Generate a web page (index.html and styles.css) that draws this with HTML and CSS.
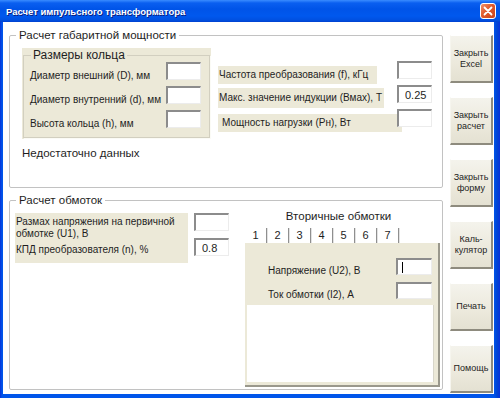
FILE: index.html
```html
<!DOCTYPE HTML>
<html>
	<head>
		<meta charset="utf-8">
		<title>Расчет импульсного трансформатора</title>
		<link rel="stylesheet" href="styles.css">
	</head>
	<body>

		<div class="window">

			<div class="titlebar">
				<span class="title">Расчет импульсного трансформатора</span>
				<span class="close-button">
					<svg width="10" height="10" viewBox="0 0 10 10"><path d="M1.5 1.5 L8.5 8.5 M8.5 1.5 L1.5 8.5" stroke="#fff" stroke-width="1.8" stroke-linecap="round"/></svg>
				</span>
			</div>

			<div class="client">

				<div class="frames">

					<fieldset class="group group-power">
						<legend>Расчет габаритной мощности</legend>

						<div class="power-body">
							<div class="ring">
								<fieldset class="ring-set">
									<legend>Размеры кольца</legend>
									<div class="ring-row">
										<span class="ring-label">Диаметр внешний (D), мм</span>
										<input class="field" type="text">
									</div>
									<div class="ring-row">
										<span class="ring-label">Диаметр внутренний (d), мм</span>
										<input class="field" type="text">
									</div>
									<div class="ring-row">
										<span class="ring-label">Высота кольца (h), мм</span>
										<input class="field" type="text">
									</div>
								</fieldset>
							</div>

							<div class="params">
								<div class="param">
									<span class="param-label param-label-freq">Частота преобразования (f), кГц</span>
									<input class="field" type="text">
								</div>
								<div class="param">
									<span class="param-label param-label-induction">Макс. значение индукции (Вмах), Т</span>
									<input class="field" type="text" value="0.25">
								</div>
								<div class="param">
									<span class="param-label param-label-power">Мощность нагрузки (Рн), Вт</span>
									<input class="field" type="text">
								</div>
							</div>
						</div>

						<div class="status">Недостаточно данных</div>
					</fieldset>

					<fieldset class="group group-windings">
						<legend>Расчет обмоток</legend>

						<div class="windings-body">
							<div class="primary">
								<div class="primary-labels">
									<span class="primary-voltage">Размах напряжения на первичной обмотке (U1), В</span>
									<span class="primary-efficiency">КПД преобразователя (n), %</span>
								</div>
								<div class="primary-fields">
									<input class="field" type="text">
									<input class="field" type="text" value="0.8">
								</div>
							</div>

							<div class="secondary">
								<div class="secondary-title">Вторичные обмотки</div>
								<div class="tabs">
									<span class="tab tab-active">1</span>
									<span class="tab">2</span>
									<span class="tab">3</span>
									<span class="tab">4</span>
									<span class="tab">5</span>
									<span class="tab">6</span>
									<span class="tab">7</span>
								</div>
								<div class="tab-page">
									<div class="secondary-row">
										<span class="secondary-label">Напряжение (U2), В</span>
										<span class="field field-focused"><i class="caret"></i></span>
									</div>
									<div class="secondary-row">
										<span class="secondary-label">Ток обмотки (I2), А</span>
										<input class="field" type="text">
									</div>
									<div class="listbox"></div>
								</div>
							</div>
						</div>
					</fieldset>

				</div>

				<div class="buttons">
					<button class="command" type="button">Закрыть<br>Excel</button>
					<button class="command" type="button">Закрыть<br>расчет</button>
					<button class="command" type="button">Закрыть<br>форму</button>
					<button class="command" type="button">Каль-<br>кулятор</button>
					<button class="command" type="button">Печать</button>
					<button class="command" type="button">Помощь</button>
				</div>

			</div>
		</div>

	</body>
</html>
```

FILE: styles.css
```css
* {
	box-sizing:				border-box;
}

html,
body {
	background:				#ffffff;
	color:					#1e1e1e;
	font-family:			"Liberation Sans", Arial, sans-serif;
	height:					100%;
	margin:					0;
	padding:				0;
}

.window {
	background:				linear-gradient(to right, #0831d9 0, #0055ea 2px, #0055ea 494px, #0044d4 497px, #0831d9 500px);
	display:				flex;
	flex-direction:			column;
	height:					398px;
	width:					500px;
}

/* title bar */

.titlebar {
	align-items:			center;
	background:				linear-gradient(to bottom, #3a8cff 0, #0a5ff0 3px, #0054e8 9px, #0058ee 16px, #0050e0 20px, #0040d0 22px);
	display:				flex;
	flex:					0 0 22px;
	justify-content:		space-between;
	padding:				0 4px 0 6px;
}

.title {
	color:					#ffffff;
	font-size:				9.5px;
	font-weight:			bold;
	text-shadow:			1px 1px 0 #0a1f80;
}

.close-button {
	align-items:			center;
	background:				linear-gradient(135deg, #f0906a 0, #e05a2c 45%, #c8441c 100%);
	border:					1px solid #ffffff;
	border-radius:			3px;
	display:				flex;
	height:					16px;
	justify-content:		center;
	width:					16px;
}

/* client area */

.client {
	background:				#ffffff;
	display:				flex;
	flex:					1;
	margin:					0 6px 4px 3px;
}

.frames {
	display:				flex;
	flex-direction:			column;
	gap:					5px;
	margin-left:			6px;
	padding-top:			6px;
	width:					434px;
}

.group {
	border:					1px solid #c2c2c2;
	border-radius:			2px;
	margin:					0;
	min-width:				0;
}

.group > legend {
	color:					#1e1e1e;
	font-size:				11.5px;
	line-height:			14px;
	padding:				0 3px;
}

.group-power {
	height:					160px;
	padding:				6px 10px 0 12px;
}

.group-power > legend {
	margin-left:			-6px;
}

.group-windings {
	height:					197px;
	padding:				6px 2px 0 5px;
}

.group-windings > legend {
	margin-left:			1px;
}

/* inputs */

.field {
	background:				#ffffff;
	border-color:			#8c8c8c #ececec #ececec #8c8c8c;
	border-style:			solid;
	border-width:			2px 1px 1px 2px;
	color:					#1e1e1e;
	display:				block;
	flex:					0 0 auto;
	font-family:			"Liberation Sans", Arial, sans-serif;
	font-size:				11px;
	height:					18px;
	margin:					0;
	outline:				none;
	padding:				0 0 0 6px;
	width:					35px;
}

.field-focused {
	align-items:			center;
	display:				flex;
	padding-left:			4px;
}

.caret {
	background:				#000000;
	display:				block;
	height:					11px;
	width:					1px;
}

/* габаритная мощность */

.power-body {
	display:				flex;
	gap:					7px;
}

.ring {
	background:				#ece9d8;
	flex:					0 0 189px;
	padding:				0 1px 1px 1px;
}

.ring-set {
	border:					1px solid #d2cfc0;
	box-shadow:				1px 1px 0 #fbfbf6;
	display:				flex;
	flex-direction:			column;
	gap:					6px;
	margin:					0;
	min-width:				0;
	padding:				0 8px 9px 6px;
}

.ring-set > legend {
	color:					#1e1e1e;
	font-size:				12px;
	line-height:			14px;
	margin-left:			1px;
	padding:				0 2px;
}

.ring-row {
	align-items:			flex-end;
	display:				flex;
	height:					18px;
	justify-content:		space-between;
}

.ring-label,
.secondary-label {
	font-size:				10px;
	line-height:			13px;
	margin-bottom:			-2px;
	white-space:			nowrap;
}

.params {
	display:				flex;
	flex-direction:			column;
	margin-top:				13px;
	width:					214px;
}

.param {
	display:				grid;
	grid-template-columns:	1fr 35px;
	height:					24px;
}

.param-label {
	background:				#ece9d8;
	font-size:				10px;
	grid-area:				1 / 1 / 2 / 3;
	height:					18px;
	line-height:			18px;
	margin-top:				5px;
	padding-left:			1px;
	white-space:			nowrap;
}

.param-label-freq {
	width:					159px;
}

.param-label-induction {
	height:					20px;
	line-height:			20px;
	margin-top:				3px;
	width:					166px;
}

.param-label-power {
	padding-left:			4px;
	width:					184px;
}

.param .field {
	grid-area:				1 / 2 / 2 / 3;
	z-index:				1;
}

.status {
	font-size:				11.5px;
	line-height:			15px;
	margin-top:				7px;
}

/* обмотки */

.windings-body {
	display:				flex;
	justify-content:		space-between;
}

.primary {
	display:				flex;
	gap:					6px;
}

.primary-labels {
	background:				#ece9d8;
	display:				flex;
	flex-direction:			column;
	font-size:				10px;
	height:					50px;
	line-height:			12px;
	padding:				3px 0 0 1px;
	width:					173px;
}

.primary-efficiency {
	margin-top:				4px;
}

.primary-fields {
	display:				flex;
	flex-direction:			column;
	gap:					7px;
}

.secondary {
	display:				flex;
	flex-direction:			column;
	margin-top:				-4px;
	width:					195px;
}

.secondary-title {
	font-size:				11.5px;
	line-height:			14px;
	margin-bottom:			5px;
	padding-right:			8px;
	text-align:				center;
}

.tabs {
	display:				flex;
	height:					15px;
}

.tab {
	border-right:			1px solid #8f8f8f;
	box-shadow:				1px 0 0 #e2e2e2;
	font-size:				11px;
	line-height:			15px;
	text-align:				center;
	width:					22px;
}

.tab-active {
	background:				#ffffff;
}

.tab-page {
	background:				#ece9d8;
	border-bottom:			2px solid #9a988c;
	border-right:			2px solid #9a988c;
	display:				flex;
	flex-direction:			column;
	gap:					7px;
	height:					144px;
	padding:				15px 6px 3px 0;
}

.secondary-row {
	align-items:			flex-end;
	display:				flex;
	height:					17px;
	justify-content:		space-between;
	padding-left:			23px;
}

.secondary-row .field {
	height:					17px;
	width:					36px;
}

.listbox {
	background:				#ffffff;
	border-right:			1px solid #d8d6ca;
	flex:					1;
	margin:					-1px -2px 0 2px;
}

/* command buttons */

.buttons {
	display:				flex;
	flex-direction:			column;
	gap:					14px;
	margin-left:			7px;
	padding-top:			13px;
}

.command {
	background:				linear-gradient(to bottom, #f4f3ec 0, #ece9dc 60%, #e4e1d2 100%);
	border-color:			#ffffff #8e8b7e #8e8b7e #f6f5ee;
	border-style:			solid;
	border-width:			1px 2px 2px 1px;
	color:					#1e1e1e;
	font-family:			"Liberation Sans", Arial, sans-serif;
	font-size:				9px;
	height:					48px;
	line-height:			11px;
	padding:				0;
	text-align:				center;
	width:					43px;
}
```
